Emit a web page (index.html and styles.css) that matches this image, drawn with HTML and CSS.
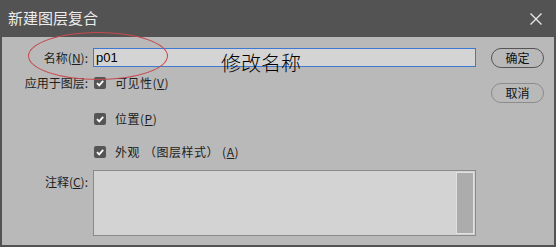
FILE: index.html
```html
<!DOCTYPE html>
<html lang="zh-CN">
<head>
    <meta charset="UTF-8">
    <title>新建图层复合</title>
    <link rel="stylesheet" href="styles.css">
</head>
<body>
    <div class="dialog">
        <div class="titlebar">
            <span class="title">新建图层复合</span>
            <svg class="close" width="12" height="12" viewBox="0 0 12 12">
                <path d="M0.5 0.5 L11.5 11.5 M11.5 0.5 L0.5 11.5" stroke="#e6e6e6" stroke-width="1.4" fill="none"/>
            </svg>
        </div>
        <div class="content">
            <div class="form">
                <div class="row row-name">
                    <span class="label">名称(<u>N</u>):</span>
                    <div class="input">p01</div>
                </div>
                <div class="row row-check row-first">
                    <span class="label">应用于图层:</span>
                    <div class="check">
                        <span class="box"><svg width="12" height="12" viewBox="0 0 12 12"><path d="M3 6.2 L5.2 8.4 L9.2 3.9" stroke="#fff" stroke-width="1.8" fill="none"/></svg></span>
                        <span class="check-text">可见性(<u>V</u>)</span>
                    </div>
                </div>
                <div class="row row-check row-second">
                    <span class="label"></span>
                    <div class="check">
                        <span class="box"><svg width="12" height="12" viewBox="0 0 12 12"><path d="M3 6.2 L5.2 8.4 L9.2 3.9" stroke="#fff" stroke-width="1.8" fill="none"/></svg></span>
                        <span class="check-text">位置(<u>P</u>)</span>
                    </div>
                </div>
                <div class="row row-check row-third">
                    <span class="label"></span>
                    <div class="check">
                        <span class="box"><svg width="12" height="12" viewBox="0 0 12 12"><path d="M3 6.2 L5.2 8.4 L9.2 3.9" stroke="#fff" stroke-width="1.8" fill="none"/></svg></span>
                        <span class="check-text">外观<span class="paren-open">（</span>图层样式<span class="paren-close">）</span>(<u>A</u>)</span>
                    </div>
                </div>
                <div class="row row-comment">
                    <span class="label label-top">注释(<u>C</u>):</span>
                    <div class="textarea">
                        <div class="text-space"></div>
                        <div class="scrollbar"></div>
                    </div>
                </div>
            </div>
            <div class="buttons">
                <div class="btn btn-primary">确定</div>
                <div class="btn">取消</div>
            </div>
        </div>
        <div class="ellipse"></div>
        <div class="note">修改名称</div>
    </div>
</body>
</html>
```

FILE: styles.css
```css
body {
    margin: 0;
    padding: 0;
    background-color: #b9b9b9;
    font-family: "Noto Sans CJK SC", "Liberation Sans", sans-serif;
}
.dialog {
    position: relative;
    width: 556px;
    height: 247px;
    box-sizing: border-box;
    border: 2px solid #535353;
    border-top: 0;
    background-color: #b9b9b9;
    overflow: hidden;
}
.titlebar {
    height: 37px;
    background-color: #535353;
    display: flex;
    align-items: center;
    justify-content: space-between;
    padding: 0 14px 0 8px;
    margin: 0 -2px;
}
.title {
    color: #ececec;
    font-size: 15px;
    line-height: 18px;
    margin-top: -1px;
}
.close {
    display: block;
}
.content {
    display: flex;
    padding-top: 11px;
}
.form {
    width: 474px;
}
.row {
    display: grid;
    grid-template-columns: 86px 383px;
    column-gap: 5px;
    align-items: center;
}
.row-name {
    height: 19px;
}
.row-check {
    height: 20px;
}
.row-first {
    margin-top: 6px;
}
.row-second {
    margin-top: 16px;
}
.row-third {
    margin-top: 13px;
}
.row-comment {
    margin-top: 8px;
    align-items: start;
}
.label {
    font-size: 12px;
    line-height: 14px;
    color: #1e1e1e;
    text-align: right;
}
.label-top {
    padding-top: 5px;
}
u {
    text-decoration-thickness: 1px;
    text-underline-offset: 1px;
}
.input {
    height: 19px;
    box-sizing: border-box;
    border: 1px solid #3f78d2;
    background-color: #d4d4d4;
    font-family: "Liberation Sans", sans-serif;
    font-size: 13px;
    line-height: 17px;
    color: #000;
    padding-left: 2px;
}
.check {
    display: flex;
    align-items: center;
    padding-left: 1px;
}
.check-text {
    font-size: 12px;
    line-height: 14px;
    color: #1e1e1e;
    letter-spacing: 0.5px;
}
.paren-open {
    margin-left: 4px;
}
.paren-close {
    margin-right: 3px;
}
.box {
    width: 12px;
    height: 12px;
    border-radius: 2px;
    background-color: #555;
    margin-right: 9px;
}
.box svg {
    display: block;
}
.textarea {
    height: 66px;
    box-sizing: border-box;
    border: 1px solid #8a8a8a;
    background-color: #d3d3d3;
    display: flex;
    padding: 1px;
}
.text-space {
    flex: 1;
}
.scrollbar {
    width: 16px;
    background-color: #acacac;
    border: 1px solid #e0e0e0;
}
.buttons {
    display: flex;
    flex-direction: column;
    gap: 15px;
    margin-left: 15px;
}
.btn {
    width: 53px;
    height: 20px;
    box-sizing: border-box;
    border: 1px solid #8c8c8c;
    border-radius: 10px;
    font-size: 12px;
    line-height: 18px;
    text-align: center;
    color: #111;
}
.btn-primary {
    border-color: #555;
}
.ellipse {
    position: absolute;
    left: 26px;
    top: 32px;
    width: 138px;
    height: 46px;
    border: 1px solid #c64a4e;
    border-radius: 50%;
}
.note {
    position: absolute;
    left: 219px;
    top: 51px;
    font-size: 20px;
    font-weight: 300;
    line-height: 24px;
    color: #000;
}
```
